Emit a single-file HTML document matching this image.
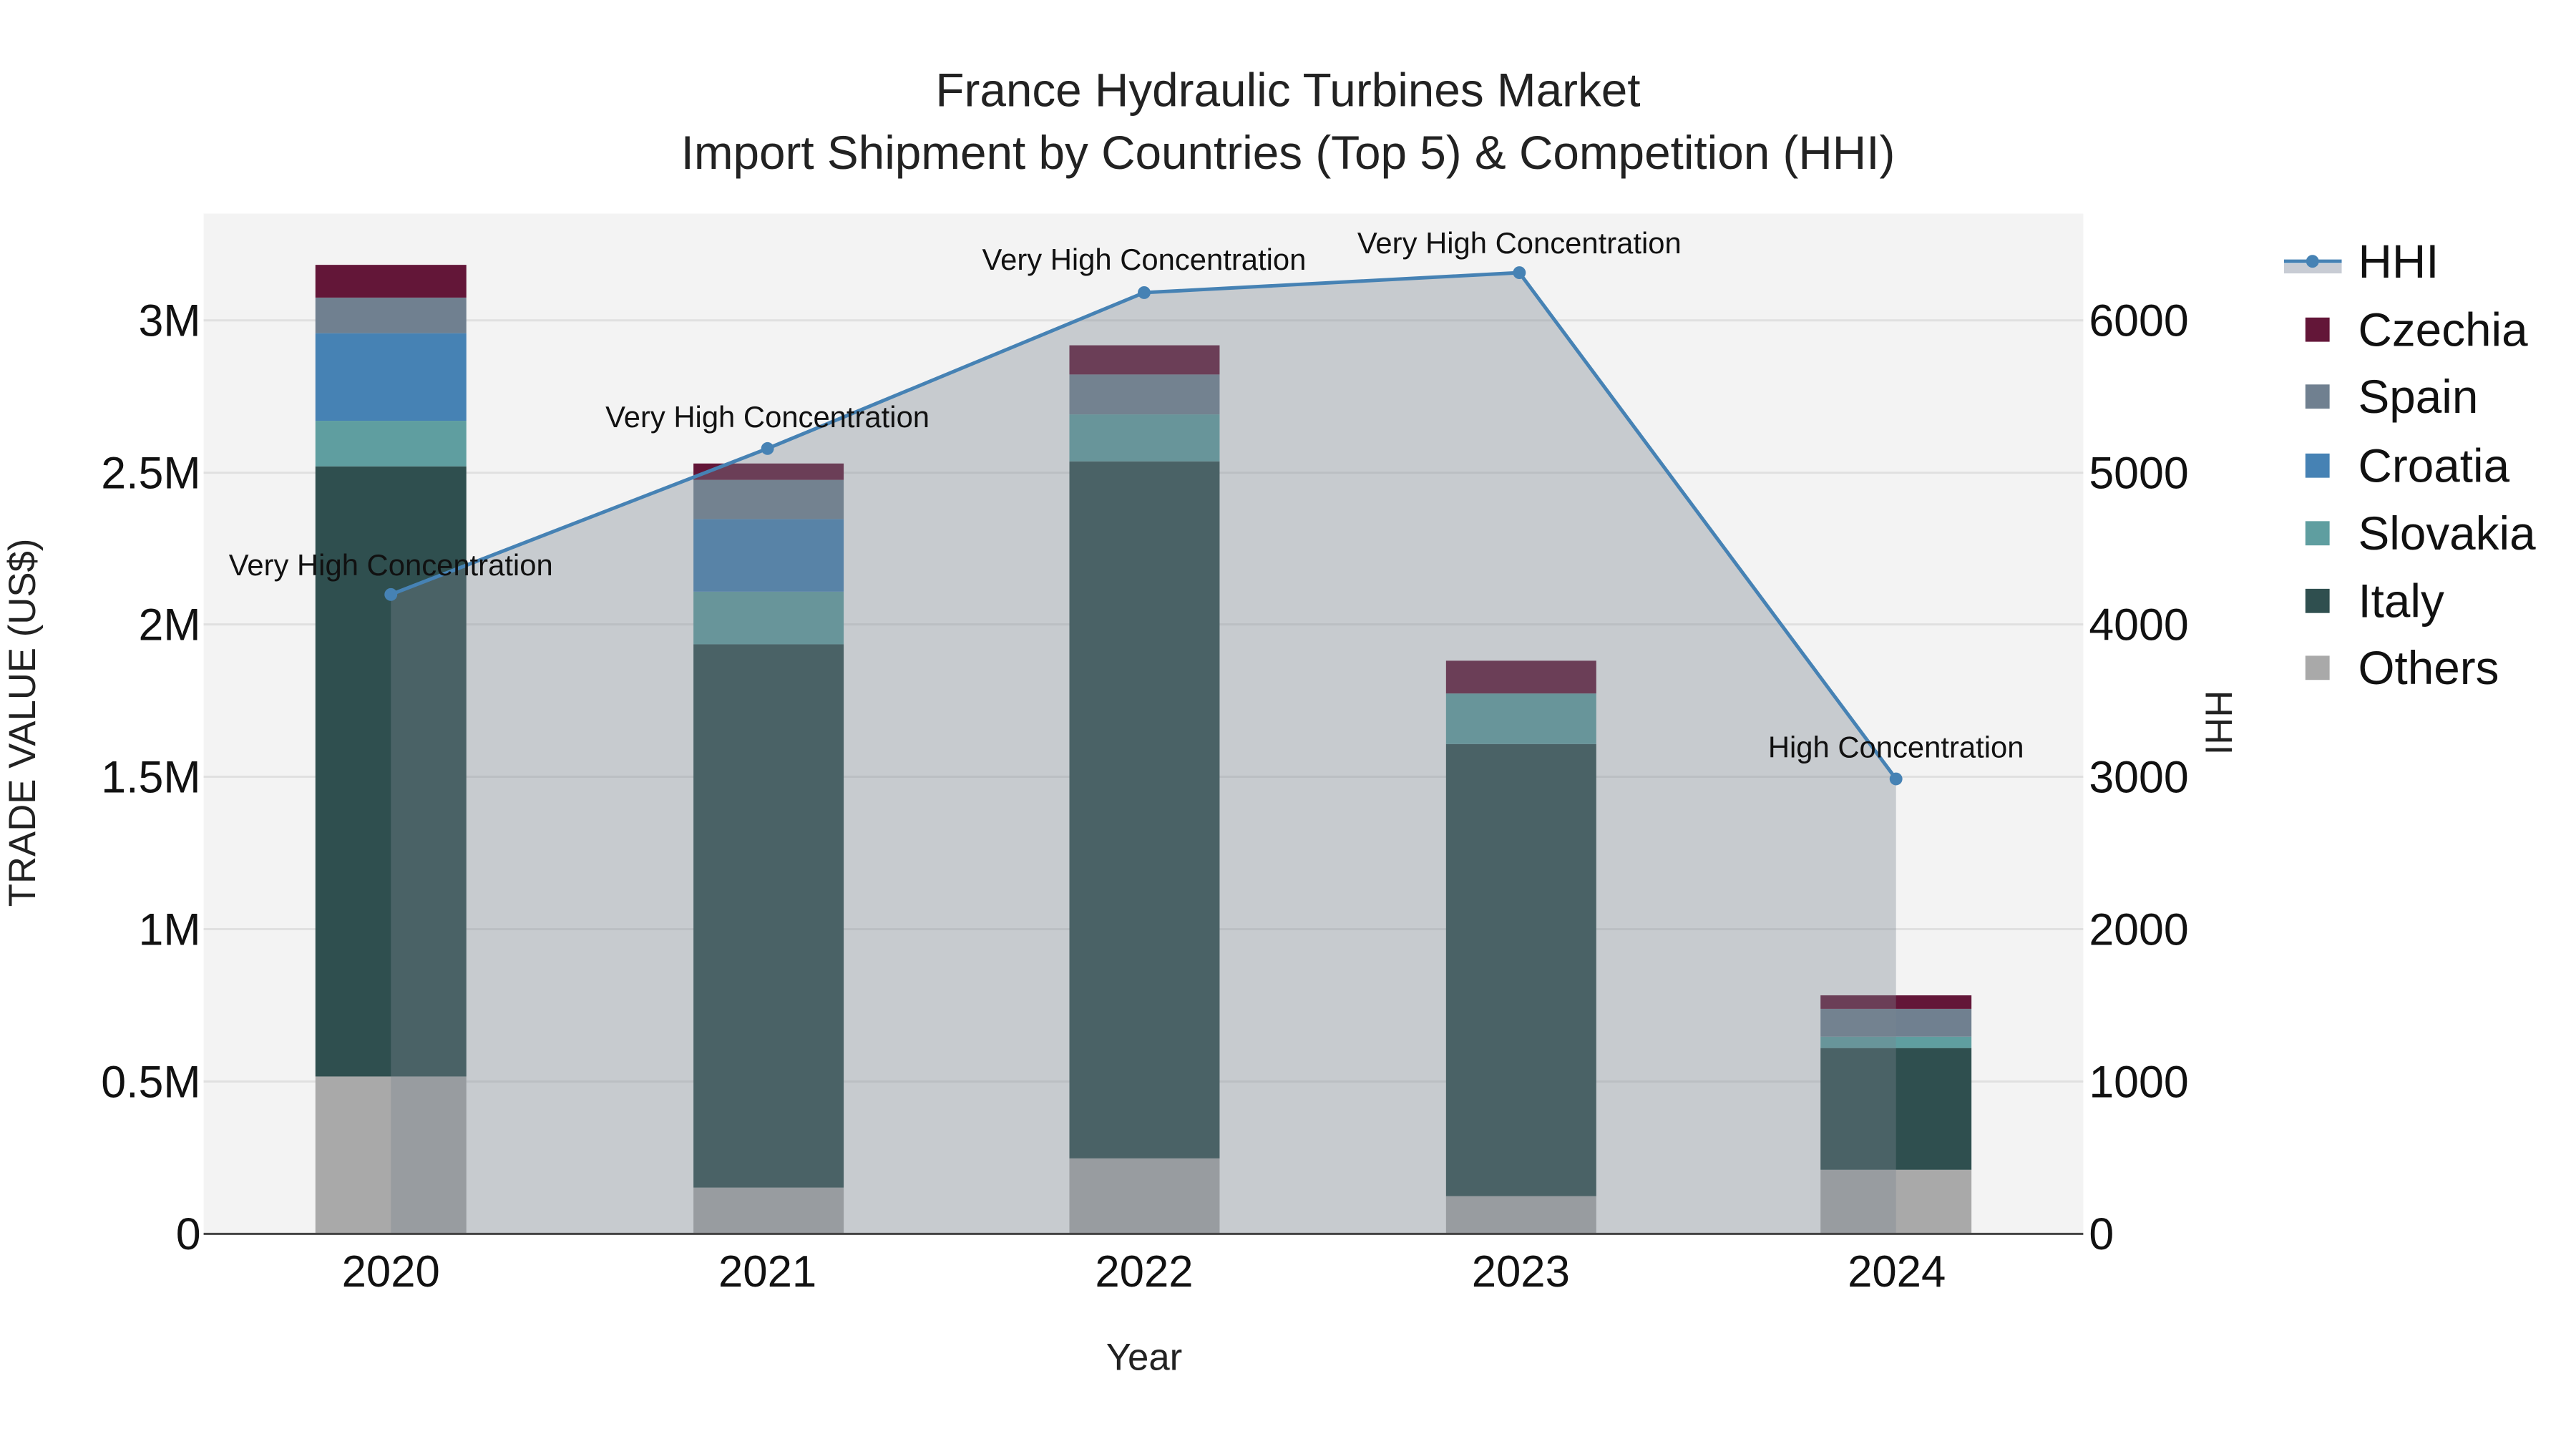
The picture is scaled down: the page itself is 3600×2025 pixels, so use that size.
<!DOCTYPE html>
<html><head><meta charset="utf-8"><style>
html,body{margin:0;padding:0;background:#fff;}
svg{display:block;font-family:"Liberation Sans",Arial,sans-serif;}
</style></head><body>
<svg width="3600" height="2025" viewBox="0 0 3600 2025" xmlns="http://www.w3.org/2000/svg">
<rect x="0" y="0" width="3600" height="2025" fill="#fff"/>
<g transform="scale(0.995)">
<rect x="286" y="300" width="2640" height="1433" fill="#f3f3f3"/>
<g stroke="#e0e0e0" stroke-width="3">
<line x1="286" x2="2926" y1="1519" y2="1519"/><line x1="286" x2="2926" y1="1305" y2="1305"/>
<line x1="286" x2="2926" y1="1091" y2="1091"/><line x1="286" x2="2926" y1="877" y2="877"/>
<line x1="286" x2="2926" y1="664" y2="664"/><line x1="286" x2="2926" y1="450" y2="450"/>
</g>
<g>
<rect x="443" y="1512" width="212" height="221" fill="#a9a9a9"/>
<rect x="443" y="655" width="212" height="857" fill="#2f4f4f"/>
<rect x="443" y="591" width="212" height="64" fill="#5f9ea0"/>
<rect x="443" y="468" width="212" height="123" fill="#4682b4"/>
<rect x="443" y="418" width="212" height="50" fill="#708090"/>
<rect x="443" y="372" width="212" height="46" fill="#631638"/>
<rect x="974" y="1668" width="211" height="65" fill="#a9a9a9"/>
<rect x="974" y="905" width="211" height="763" fill="#2f4f4f"/>
<rect x="974" y="831" width="211" height="74" fill="#5f9ea0"/>
<rect x="974" y="729" width="211" height="102" fill="#4682b4"/>
<rect x="974" y="674" width="211" height="55" fill="#708090"/>
<rect x="974" y="651" width="211" height="23" fill="#631638"/>
<rect x="1502" y="1627" width="211" height="106" fill="#a9a9a9"/>
<rect x="1502" y="648" width="211" height="979" fill="#2f4f4f"/>
<rect x="1502" y="582" width="211" height="66" fill="#5f9ea0"/>
<rect x="1502" y="526" width="211" height="56" fill="#708090"/>
<rect x="1502" y="485" width="211" height="41" fill="#631638"/>
<rect x="2031" y="1680" width="211" height="53" fill="#a9a9a9"/>
<rect x="2031" y="1045" width="211" height="635" fill="#2f4f4f"/>
<rect x="2031" y="974" width="211" height="71" fill="#5f9ea0"/>
<rect x="2031" y="928" width="211" height="46" fill="#631638"/>
<rect x="2557" y="1643" width="212" height="90" fill="#a9a9a9"/>
<rect x="2557" y="1472" width="212" height="171" fill="#2f4f4f"/>
<rect x="2557" y="1456" width="212" height="16" fill="#5f9ea0"/>
<rect x="2557" y="1417" width="212" height="39" fill="#708090"/>
<rect x="2557" y="1398" width="212" height="19" fill="#631638"/>
</g>
<polygon points="549,835 1078,630 1607,411 2134,383 2663,1094 2663,1733 549,1733" fill="rgba(123,132,143,0.36)"/>
<line x1="286" x2="2926" y1="1733" y2="1733" stroke="#444" stroke-width="3"/>
<polyline points="549,835 1078,630 1607,411 2134,383 2663,1094" fill="none" stroke="#4682b4" stroke-width="5"/>
<g fill="#4682b4">
<circle cx="549" cy="835" r="9"/><circle cx="1078" cy="630" r="9"/><circle cx="1607" cy="411" r="9"/><circle cx="2134" cy="383" r="9"/><circle cx="2663" cy="1094" r="9"/>
</g>
<g font-size="42" fill="#111" text-anchor="middle">
<text x="549" y="808">Very High Concentration</text>
<text x="1078" y="600">Very High Concentration</text>
<text x="1607" y="379">Very High Concentration</text>
<text x="2134" y="356">Very High Concentration</text>
<text x="2663" y="1064">High Concentration</text>
</g>
<g text-anchor="middle" fill="#222" font-size="66">
<text x="1809" y="149">France Hydraulic Turbines Market</text>
<text x="1809" y="237">Import Shipment by Countries (Top 5) &amp; Competition (HHI)</text>
</g>
<g font-size="63" fill="#111" text-anchor="end">
<text x="282" y="1755">0</text><text x="282" y="1541">0.5M</text><text x="282" y="1327">1M</text>
<text x="282" y="1113">1.5M</text><text x="282" y="899">2M</text><text x="282" y="686">2.5M</text><text x="282" y="472">3M</text>
</g>
<g font-size="63" fill="#111" text-anchor="start">
<text x="2934" y="1755">0</text><text x="2934" y="1541">1000</text><text x="2934" y="1327">2000</text>
<text x="2934" y="1113">3000</text><text x="2934" y="899">4000</text><text x="2934" y="686">5000</text><text x="2934" y="472">6000</text>
</g>
<g font-size="62" fill="#111" text-anchor="middle">
<text x="549" y="1807">2020</text><text x="1078" y="1807">2021</text><text x="1607" y="1807">2022</text><text x="2136" y="1807">2023</text><text x="2664" y="1807">2024</text>
</g>
<text x="1607" y="1924" font-size="53" fill="#222" text-anchor="middle">Year</text>
<text transform="translate(49,1015) rotate(-90)" font-size="53" fill="#222" text-anchor="middle">TRADE VALUE (US$)</text>
<text transform="translate(3098,1015) rotate(90)" font-size="53" fill="#222" text-anchor="middle">HHI</text>
<rect x="3208" y="370" width="81" height="14" fill="#c8ccd4"/>
<line x1="3208" x2="3289" y1="367" y2="367" stroke="#4682b4" stroke-width="5"/>
<circle cx="3248" cy="367" r="9" fill="#4682b4"/>
<g font-size="66" fill="#111">
<text x="3312" y="390">HHI</text>
<text x="3312" y="486">Czechia</text>
<text x="3312" y="580">Spain</text>
<text x="3312" y="677">Croatia</text>
<text x="3312" y="772">Slovakia</text>
<text x="3312" y="867">Italy</text>
<text x="3312" y="961">Others</text>
</g>
<rect x="3238" y="446" width="34" height="34" fill="#631638"/>
<rect x="3238" y="540" width="34" height="34" fill="#708090"/>
<rect x="3238" y="637" width="34" height="34" fill="#4682b4"/>
<rect x="3238" y="732" width="34" height="34" fill="#5f9ea0"/>
<rect x="3238" y="827" width="34" height="34" fill="#2f4f4f"/>
<rect x="3238" y="921" width="34" height="34" fill="#a9a9a9"/>
</g>
</svg>
</body></html>
